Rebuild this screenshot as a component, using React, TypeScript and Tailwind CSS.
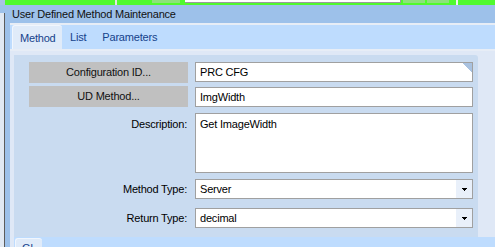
import type { ReactNode } from 'react';

// tiny dropdown arrow, drawn pixel by pixel like the original
function Arrow() {
  return (
    <svg width="5" height="3" viewBox="0 0 5 3" shapeRendering="crispEdges">
      <rect x="0" y="0" width="5" height="1" fill="#000" />
      <rect x="1" y="1" width="3" height="1" fill="#000" />
      <rect x="2" y="2" width="1" height="1" fill="#000" />
    </svg>
  );
}

function FieldLabel({ children, top = false }: { children: ReactNode; top?: boolean }) {
  return (
    <div
      className={`w-[159px] shrink-0 pr-[1px] text-right text-[11px] tracking-[-0.2px] text-black ${
        top ? 'pt-[4px] leading-[14px]' : 'leading-[20px]'
      }`}
    >
      {children}
    </div>
  );
}

function LookupButton({ label }: { label: string }) {
  return (
    <div className="w-[159px] h-[21px] shrink-0 bg-[#c0c0c0] text-center text-[11px] leading-[21px] tracking-[-0.2px] text-[#111]">
      {label}
    </div>
  );
}

function TextBox({ value, corner = false }: { value: string; corner?: boolean }) {
  return (
    <div className="relative w-[278px] h-[20px] border border-[#a0a0a0] bg-white px-[4px] text-[11px] leading-[18px] tracking-[-0.2px] text-black">
      {value}
      {corner && (
        <svg
          className="absolute right-0 top-0"
          width="10"
          height="10"
          viewBox="0 0 10 10"
          shapeRendering="crispEdges"
        >
          <polygon points="0,0 10,0 10,10" fill="#a9c2e0" />
        </svg>
      )}
    </div>
  );
}

function SelectBox({ value }: { value: string }) {
  return (
    <div className="flex w-[278px] h-[20px] border border-[#a0a0a0] bg-white text-[11px] leading-[18px] tracking-[-0.2px] text-black">
      <div className="flex-1 px-[4px]">{value}</div>
      <div className="flex w-[16px] items-center justify-center bg-[#e9f0fa] pt-[1px]">
        <Arrow />
      </div>
    </div>
  );
}

export default function App() {
  return (
    <div className="flex w-[495px] h-[247px] overflow-hidden bg-[#dfe8f6] font-['Liberation_Sans',Arial,sans-serif]">
      {/* window edge behind, on the far left */}
      <div className="flex w-[5px] shrink-0 flex-col">
        <div className="h-[5px] bg-[#a8c3e3]" />
        <div className="h-[8px] bg-[#9dc1ea]" />
        <div className="flex-1 border-r border-[#5c5c5c] bg-[#e1e9f3]" />
      </div>

      <div className="flex min-w-0 flex-1 flex-col">
        {/* strip of the window above */}
        <div className="flex h-[5px] items-start bg-[#50fa2e]">
          <div className="w-[110px]" />
          <div className="h-[5px] w-[2px] bg-[#e4e4e4]" />
          <div className="w-[35px]" />
          <div className="h-[3px] w-[28px] bg-[#8de27b]" />
          <div className="w-[5px]" />
          <div className="h-[3px] w-[216px] border-b border-r border-[#9a9a9a] bg-white" />
          <div className="w-[2px]" />
          <div className="h-[3px] w-[22px] bg-[#8de27b]" />
          <div className="w-[2px]" />
          <div className="h-[3px] w-[22px] bg-[#8de27b]" />
          <div className="w-[7px]" />
          <div className="h-[5px] w-[2px] bg-[#f2f2f2]" />
        </div>

        {/* title bar */}
        <div className="h-[18px] bg-[#9dc1ea] pl-[7px] text-[11px] leading-[18px] tracking-[-0.2px] text-[#111]">
          User Defined Method Maintenance
        </div>

        <div className="flex flex-1">
          <div className="w-[5px] shrink-0 bg-[#9dc1ea]" />

          <div className="flex min-w-0 flex-1 flex-col">
            <div className="h-[2px] bg-[#e7edf6]" />

            {/* tabs */}
            <div className="flex h-[24px] bg-[#bedcfe] pl-[2px] text-[11px] leading-[24px] tracking-[-0.2px] text-[#15428b]">
              <div className="w-[50px] rounded-t-[3px] border-l border-t border-[#f1f6fd] bg-[#e0ebf9] pl-[7px]">
                Method
              </div>
              <div className="px-[8px]">List</div>
              <div className="px-[8px]">Parameters</div>
            </div>

            <div className="h-[2px] bg-[#e7edf6]" />

            {/* form area */}
            <div className="pl-[4px] pr-[17px] pt-[4px]">
              <div className="flex h-[182px] flex-col rounded-tr-[3px] bg-[#c9dbf0] pl-[15px] pt-[7px]">
                <div className="flex items-start gap-[7px]">
                  <LookupButton label="Configuration ID..." />
                  <TextBox value="PRC CFG" corner />
                </div>
                <div className="mt-[3px] flex items-start gap-[7px]">
                  <LookupButton label="UD Method..." />
                  <div className="mt-[1px]">
                    <TextBox value="ImgWidth" />
                  </div>
                </div>
                <div className="mt-[6px] flex items-start gap-[7px]">
                  <FieldLabel top>Description:</FieldLabel>
                  <div className="h-[60px] w-[278px] border border-[#a0a0a0] bg-white px-[4px] pt-[3px] text-[11px] leading-[14px] tracking-[-0.2px] text-black">
                    Get ImageWidth
                  </div>
                </div>
                <div className="mt-[6px] flex items-start gap-[7px]">
                  <FieldLabel>Method Type:</FieldLabel>
                  <SelectBox value="Server" />
                </div>
                <div className="mt-[9px] flex items-start gap-[7px]">
                  <FieldLabel>Return Type:</FieldLabel>
                  <SelectBox value="decimal" />
                </div>
              </div>
            </div>

            {/* lower tab strip, mostly cut off */}
            <div className="ml-[4px] flex-1 overflow-hidden bg-[#bedcfe] pl-[1px] pt-[1px]">
              <div className="h-[20px] w-[27px] rounded-t-[3px] border-l border-t border-[#f1f6fd] bg-[#e0ebf9] pl-[6px] pt-[2px] text-[11px] leading-[14px] text-[#15428b]">
                Gl
              </div>
            </div>
          </div>
        </div>
      </div>
    </div>
  );
}
